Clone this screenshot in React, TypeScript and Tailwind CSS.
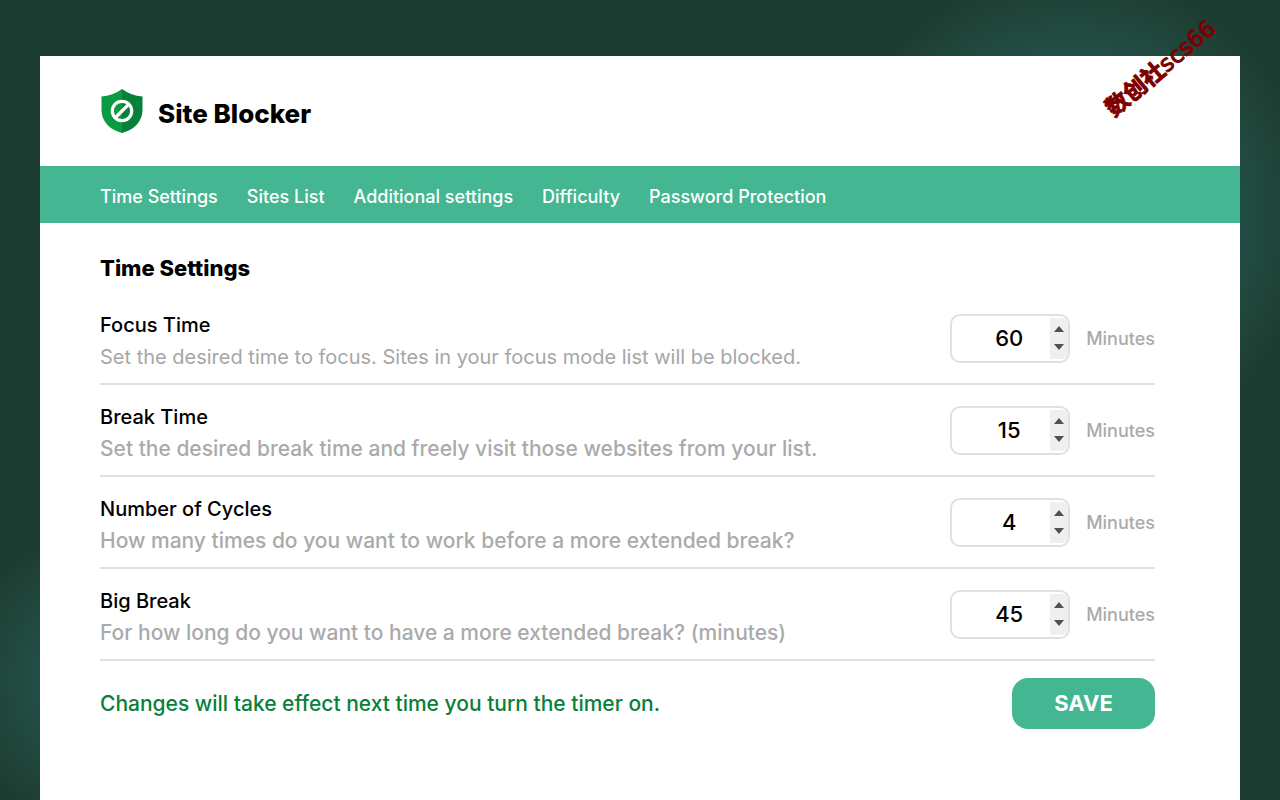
import { useState } from "react";

type Setting = {
  id: string;
  title: string;
  description: string;
  initial: number;
  small?: boolean;
};

const NAV_ITEMS = [
  "Time Settings",
  "Sites List",
  "Additional settings",
  "Difficulty",
  "Password Protection",
];

const SETTINGS: Setting[] = [
  {
    id: "focus-time",
    title: "Focus Time",
    description: "Set the desired time to focus. Sites in your focus mode list will be blocked.",
    initial: 60,
    small: true,
  },
  {
    id: "break-time",
    title: "Break Time",
    description: "Set the desired break time and freely visit those websites from your list.",
    initial: 15,
  },
  {
    id: "cycles",
    title: "Number of Cycles",
    description: "How many times do you want to work before a more extended break?",
    initial: 4,
  },
  {
    id: "big-break",
    title: "Big Break",
    description: "For how long do you want to have a more extended break? (minutes)",
    initial: 45,
  },
];

function ShieldLogo() {
  return (
    <svg viewBox="-1 0.5 44 45" className="h-[45px] w-11" aria-hidden="true">
      <path d="M21 0.5C15 5 8 7.5 0.5 8v13.5C0.5 33 9 41.5 21 44.5z" fill="#0a9a41" />
      <path d="M21 0.5C27 5 34 7.5 41.5 8v13.5C41.5 33 33 41.5 21 44.5z" fill="#07803a" />
      <circle cx="21" cy="22.5" r="9.7" fill="none" stroke="#fff" strokeWidth="3.2" />
      <path d="M14.5 29L27.5 16" stroke="#fff" strokeWidth="3.2" />
    </svg>
  );
}

function MinutesField({ id, initial }: { id: string; initial: number }) {
  const [value, setValue] = useState(initial);

  return (
    <div className="flex shrink-0 items-center gap-4">
      <div className="relative">
        <input
          id={id}
          type="number"
          min={0}
          value={value}
          onChange={(e) => setValue(Number(e.target.value))}
          className="block h-[49px] w-30 appearance-none rounded-[10px] border-2 border-[#e0e0e0] bg-white pr-0.5 text-center text-[22px] font-medium text-black [-moz-appearance:textfield] [&::-webkit-inner-spin-button]:appearance-none"
        />
        <div className="absolute inset-y-1 right-0.5 flex w-[18px] flex-col rounded-r-md bg-[#efefef]">
          <button
            type="button"
            aria-label="Increase"
            onClick={() => setValue(value + 1)}
            className="flex flex-1 items-end justify-center pb-1.5"
          >
            <svg viewBox="0 0 10 6" className="h-1.5 w-2.5">
              <path d="M0 6L5 0l5 6z" fill="#505050" />
            </svg>
          </button>
          <button
            type="button"
            aria-label="Decrease"
            onClick={() => setValue(Math.max(0, value - 1))}
            className="flex flex-1 items-start justify-center pt-1.5"
          >
            <svg viewBox="0 0 10 6" className="h-1.5 w-2.5">
              <path d="M0 0L5 6l5-6z" fill="#505050" />
            </svg>
          </button>
        </div>
      </div>
      <span className="pt-0.5 text-lg font-medium text-[#aaaaaa]">Minutes</span>
    </div>
  );
}

export default function App() {
  return (
    <div className="relative flex min-h-screen flex-col overflow-hidden bg-[#1e3d32] bg-[radial-gradient(circle_240px_at_1070px_215px,#22564c_0%,#225047_65%,transparent_100%),radial-gradient(circle_150px_at_110px_680px,#22564c_0%,#225047_45%,transparent_100%)] px-10 pt-14 font-['Inter',sans-serif]">
      <div className="flex flex-1 flex-col bg-white">
        <header className="flex h-[110px] items-center gap-3.5 px-15">
          <ShieldLogo />
          <h1 className="pt-1.5 text-[26px] leading-8 font-extrabold text-black">Site Blocker</h1>
        </header>

        <nav className="flex h-[57px] items-center gap-[29px] bg-[#45b692] px-15 pt-1">
          {NAV_ITEMS.map((item) => (
            <a key={item} href="#" className="text-lg font-medium text-white">
              {item}
            </a>
          ))}
        </nav>

        <main className="pt-8 pr-[85px] pb-10 pl-15">
          <h2 className="mb-3 text-[22px] leading-[26px] font-extrabold text-black">
            Time Settings
          </h2>

          <form onSubmit={(e) => e.preventDefault()}>
            {SETTINGS.map((s) => (
              <div
                key={s.id}
                className="flex items-center justify-between border-b-2 border-[#e0e0e0]"
              >
                <div className="min-w-0 pt-5 pb-2.5">
                  <label htmlFor={s.id} className="block text-xl leading-6 font-medium text-black">
                    {s.title}
                  </label>
                  <p
                    className={
                      s.small
                        ? "mt-1 text-xl leading-8 text-[#a6a6a6]"
                        : "mt-1 text-[21px] leading-8 font-medium text-[#aaaaaa]"
                    }
                  >
                    {s.description}
                  </p>
                </div>
                <MinutesField id={s.id} initial={s.initial} />
              </div>
            ))}

            <div className="flex items-center justify-between pt-[17px]">
              <p className="text-[21px] font-medium text-[#08803a]">
                Changes will take effect next time you turn the timer on.
              </p>
              <button
                type="submit"
                className="h-[51px] w-[143px] rounded-2xl bg-[#45b692] text-[22px] font-bold text-white"
              >
                SAVE
              </button>
            </div>
          </form>
        </main>
      </div>

      <span className="pointer-events-none absolute top-13 right-13 -rotate-[40deg] font-['DejaVu_Sans','Noto_Sans_CJK_SC',sans-serif] text-[23px] leading-8 whitespace-nowrap text-[#7d0000] [-webkit-text-stroke:1px_#7d0000]">
        <b>数创社</b>scs66
      </span>
    </div>
  );
}
